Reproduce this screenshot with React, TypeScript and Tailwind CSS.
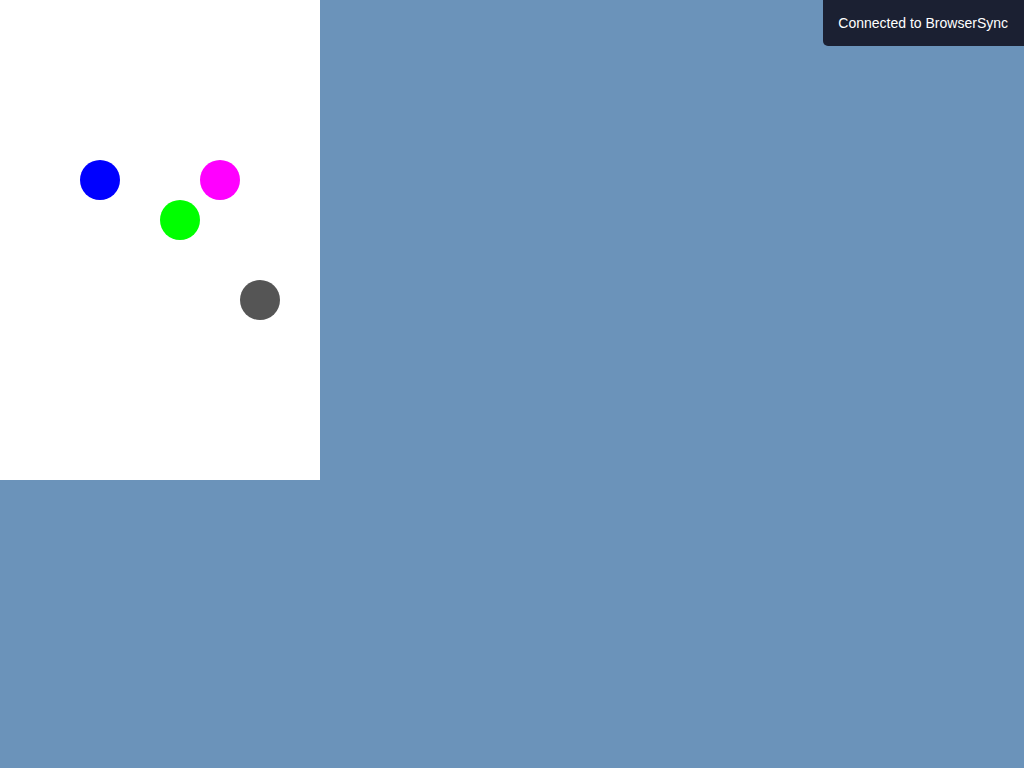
export default function App() {
  const dots = [
    { x: 80, y: 160, c: "bg-[#0000ff]" },
    { x: 200, y: 160, c: "bg-[#ff00ff]" },
    { x: 160, y: 200, c: "bg-[#00ff00]" },
    { x: 240, y: 280, c: "bg-[#555555]" },
  ];
  return (
    <div className="min-h-screen w-full bg-[#6b93ba] relative">
      {/* canvas */}
      <div className="relative w-[320px] h-[480px] bg-white">
        {dots.map((d, i) => (
          <div
            key={i}
            className={`absolute w-10 h-10 rounded-full ${d.c}`}
            style={{ left: d.x, top: d.y }}
          />
        ))}
      </div>

      {/* BrowserSync notice */}
      <div className="absolute top-0 right-0 bg-[#1b2032] text-white py-[15px] pl-[15px] pr-[16px] rounded-bl-[5px] text-[14px] leading-[16px] font-['Liberation_Sans',Arial,sans-serif]">
        Connected to BrowserSync
      </div>
    </div>
  );
}
